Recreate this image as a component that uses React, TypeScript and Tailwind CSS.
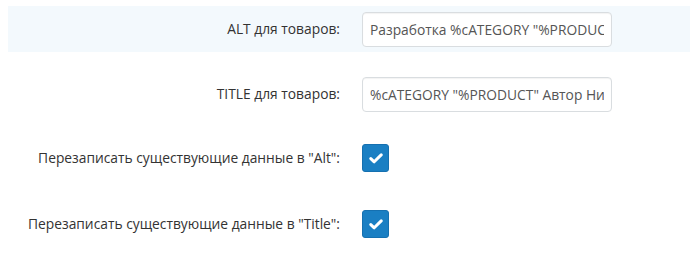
const fieldCls =
  "ml-[22px] w-[250px] h-[35px] rounded-[4px] border border-[#d9dde0] bg-white px-[7px] text-[13.8px] text-[#555] outline-none shadow-[inset_0_1px_1px_rgba(0,0,0,0.05)] overflow-hidden whitespace-nowrap";

function CheckBox() {
  return (
    <div className="ml-[22px] w-[27px] h-[28px] rounded-[3px] bg-[#1a7fc3] border border-[#1570b0] flex items-center justify-center">
      <svg width="14" height="11" viewBox="0 0 14 11">
        <path
          d="M1.8 5.6 L5.2 8.8 L12.2 1.9"
          fill="none"
          stroke="#fff"
          strokeWidth="3"
          strokeLinecap="round"
          strokeLinejoin="round"
        />
      </svg>
    </div>
  );
}

function Row({ label, children, className = "" }: { label: string; children: React.ReactNode; className?: string }) {
  return (
    <div className={"flex items-center h-[46px] " + className}>
      <div className="w-[332px] text-right text-[13.8px] text-[#333]">{label}</div>
      {children}
    </div>
  );
}

export default function App() {
  return (
    <div className="w-[690px] h-[258px] bg-white pt-[6px] pl-[8px] font-['Open_Sans',sans-serif]">
      <Row label="ALT для товаров:" className="bg-[#f3f9fd]">
        <input className={fieldCls} readOnly value={'Разработка %cATEGORY "%PRODUCT" Автор Н'} />
      </Row>
      <Row label="TITLE для товаров:" className="mt-[19px]">
        <input className={fieldCls} readOnly value={'%cATEGORY "%PRODUCT" Автор Нина'} />
      </Row>
      <Row label={'Перезаписать существующие данные в "Alt":'} className="mt-[18px]">
        <CheckBox />
      </Row>
      <Row label={'Перезаписать существующие данные в "Title":'} className="mt-[20px]">
        <CheckBox />
      </Row>
    </div>
  );
}
